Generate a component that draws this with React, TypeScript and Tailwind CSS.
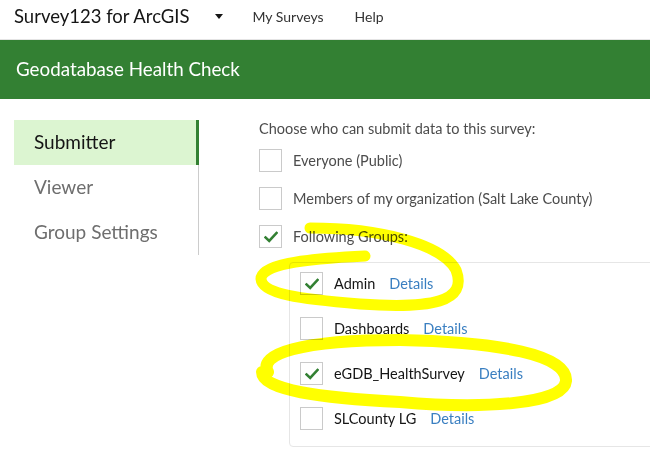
import React from "react";

const font = { fontFamily: "Lato, 'Noto Sans', sans-serif" };

function Check() {
  return (
    <svg width="14" height="12" viewBox="0 0 14 12">
      <path d="M1.5 6.5 L5.2 10 L12.5 2" fill="none" stroke="#338033" strokeWidth="2.6" strokeLinecap="square" />
    </svg>
  );
}

function Box({ checked }: { checked?: boolean }) {
  return (
    <span className="flex h-[23px] w-[23px] shrink-0 items-center justify-center border border-[#cacaca] bg-white">
      {checked ? <Check /> : null}
    </span>
  );
}

const groups = [
  { name: "Admin", checked: true },
  { name: "Dashboards", checked: false },
  { name: "eGDB_HealthSurvey", checked: true },
  { name: "SLCounty LG", checked: false },
];

export default function App() {
  return (
    <div className="relative h-[471px] w-[650px] overflow-hidden bg-white" style={font}>
      {/* top navigation */}
      <div className="flex h-[40px] items-center border-b border-[#e4e4e4] pb-[6px]">
        <span className="ml-[14px] text-[18.5px] text-[#151515]">Survey123 for ArcGIS</span>
        <svg className="ml-[25px]" width="8" height="5" viewBox="0 0 8 5">
          <path d="M0 0 H8 L4 5 Z" fill="#151515" />
        </svg>
        <span className="ml-[30px] text-[14px] text-[#333]">My Surveys</span>
        <span className="ml-[31px] text-[14px] text-[#333]">Help</span>
      </div>

      {/* survey title band */}
      <div className="flex h-[59px] items-center bg-[#338033] pl-[16px]">
        <span className="text-[18.8px] text-white">Geodatabase Health Check</span>
      </div>

      <div className="flex pt-[21px]">
        {/* settings tabs */}
        <div className="ml-[14px] w-[185px] shrink-0 self-start border-r border-[#cccccc]">
          <div className="flex h-[45px] items-center border-r-[3px] border-[#338033] bg-[#dcf5d1] pl-[20px] -mr-px text-[19px] text-[#151515]">
            Submitter
          </div>
          <div className="flex h-[45px] items-center pl-[20px] text-[19px] text-[#6e6e6e]">Viewer</div>
          <div className="flex h-[45px] items-center pl-[20px] text-[19px] text-[#6e6e6e]">Group Settings</div>
        </div>

        {/* submitter options */}
        <div className="ml-[60px] flex-1 text-[14.5px] text-[#4c4c4c]">
          <div className="flex h-[17px] items-center">Choose who can submit data to this survey:</div>
          <div className="mt-[12px] flex flex-col gap-[15px]">
            <label className="flex items-center gap-[11px]">
              <Box />
              <span>Everyone (Public)</span>
            </label>
            <label className="flex items-center gap-[11px]">
              <Box />
              <span>Members of my organization (Salt Lake County)</span>
            </label>
            <label className="flex items-center gap-[11px]">
              <Box checked />
              <span>Following Groups:</span>
            </label>
          </div>
          <div className="ml-[30px] mt-[14px] flex h-[185px] flex-col gap-[22px] rounded-[4px] border border-[#e6e6e6] pl-[10px] pt-[9px] -mr-[10px]">
            {groups.map((g) => (
              <div key={g.name} className="flex items-center">
                <Box checked={g.checked} />
                <span className="ml-[11px] text-[#151515]">{g.name}</span>
                <span className="ml-[14px] text-[#3a7fc1]">Details</span>
              </div>
            ))}
          </div>
        </div>
      </div>

      {/* hand-drawn highlight loops */}
      <svg className="pointer-events-none absolute left-0 top-0 mix-blend-multiply" width="650" height="471" viewBox="0 0 650 471">
        <path
          d="M310 228 C380 228 442 244 456 270 C468 302 432 309 360 304 C300 299 262 294 261 279 C261 265 300 259 365 256"
          fill="none"
          stroke="#ffff00"
          strokeWidth="11"
          strokeLinecap="round"
          strokeLinejoin="round"
        />
        <path
          d="M268 372 C258 354 300 340 400 340 C500 342 568 355 566 381 C564 405 480 409 400 402 C320 398 262 390 262 372"
          fill="none"
          stroke="#ffff00"
          strokeWidth="12"
          strokeLinecap="round"
          strokeLinejoin="round"
        />
      </svg>
    </div>
  );
}
